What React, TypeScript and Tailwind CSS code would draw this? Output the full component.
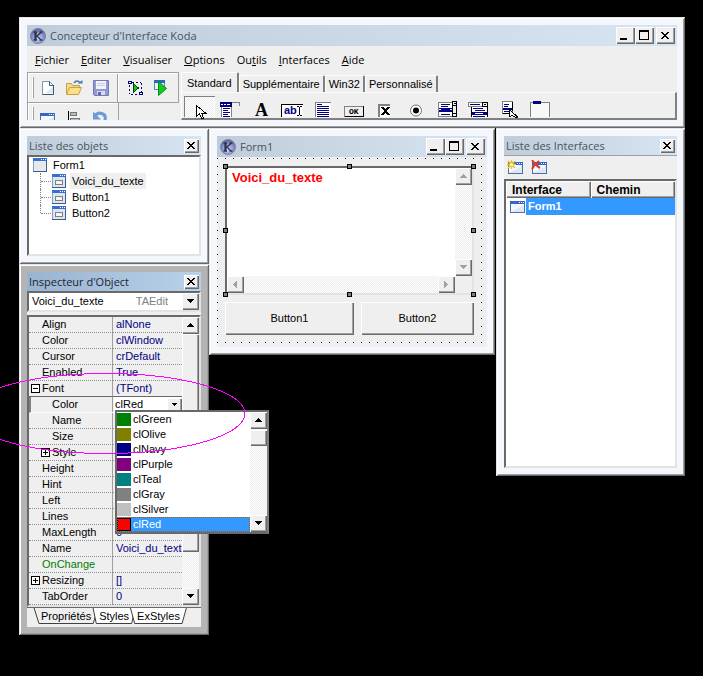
import { useState } from "react";
import type { ReactNode } from "react";

const raised = "bg-[#efefef] shadow-[inset_1px_1px_#fff,inset_-1px_-1px_#696969,inset_-2px_-2px_#a0a0a0]";
const track = "bg-[repeating-conic-gradient(#fff_0_25%,#ececec_0_50%)] bg-[length:2px_2px]";
const sunken = "border-2 border-t-[#696969] border-l-[#696969] border-r-[#e3e3e3] border-b-[#e3e3e3]";

interface WindowProps {
  className: string;
  active?: boolean;
  children: ReactNode;
}

function Window({ className, active, children }: WindowProps) {
  return (
    <section
      className={`absolute p-2 shadow-[inset_1px_1px_#e3e3e3,inset_-1px_-1px_#696969,inset_2px_2px_#fff,inset_-2px_-2px_#a0a0a0] ${
        active ? "bg-[#b4b4b4]" : "bg-[#f4f7fc]"
      } ${className}`}
    >
      <div className="flex h-full flex-col bg-[#efefef]">{children}</div>
    </section>
  );
}

function KodaLogo() {
  return (
    <svg width="16" height="16" viewBox="0 0 16 16" className="shrink-0">
      <defs>
        <radialGradient id="koda" cx="50%" cy="65%" r="60%">
          <stop offset="0" stopColor="#d5d9fa" />
          <stop offset="0.6" stopColor="#8b93cf" />
          <stop offset="1" stopColor="#5c659c" />
        </radialGradient>
      </defs>
      <circle cx="8" cy="8" r="7.5" fill="url(#koda)" stroke="#7d86a8" />
      <path d="M4 4l1 0v8M6 4v8M3.500 4h3.500M3.500 12h3.500M11.500 4L7 8l4 4M9.500 4h3M9.500 12h3" fill="none" stroke="#30344e" strokeWidth="1.3" />
    </svg>
  );
}

function CloseGlyph() {
  return (
    <svg width="8" height="7" viewBox="0 0 8 7" shapeRendering="crispEdges" className="mr-px mb-px">
      <path d="M0 0h2v1h-2zM6 0h2v1h-2zM1 1h2v1h-2zM5 1h2v1h-2zM2 2h4v1h-4zM3 3h2v1h-2zM2 4h4v1h-4zM1 5h2v1h-2zM5 5h2v1h-2zM0 6h2v1h-2zM6 6h2v1h-2z" />
    </svg>
  );
}

function SystemButtons() {
  return (
    <div className="flex pr-[2px]">
      <button aria-label="Réduire" className={`flex h-[17px] w-[19px] items-end justify-center pb-1 ${raised}`}>
        <span className="mr-1 h-[2px] w-[7px] bg-black" />
      </button>
      <button aria-label="Agrandir" className={`flex h-[17px] w-[19px] items-center justify-center ${raised}`}>
        <span className="mr-px mb-px h-[10px] w-[10px] border border-t-2 border-black" />
      </button>
      <button aria-label="Fermer" className={`ml-[2px] flex h-[17px] w-[19px] items-center justify-center ${raised}`}>
        <CloseGlyph />
      </button>
    </div>
  );
}

function FormTitle({ title }: { title: string }) {
  return (
    <header className="flex h-[21px] shrink-0 items-center gap-1 bg-linear-to-r from-[#bfcddb] to-[#d7e4f2] pl-[3px]">
      <KodaLogo />
      <h2 className="flex-1 font-['Open_Sans',sans-serif] text-[11px] leading-4 text-[#4a5260]">{title}</h2>
      <SystemButtons />
    </header>
  );
}

function ToolTitle({ title, active }: { title: string; active?: boolean }) {
  return (
    <header
      className={`flex h-[19px] shrink-0 items-center justify-between bg-linear-to-r pr-[2px] pl-[2px] ${
        active ? "from-[#99b4d1] to-[#b9d1ea] text-[#1c2530]" : "from-[#bfcddb] to-[#d7e4f2] text-[#4a5260]"
      }`}
    >
      <h2 className="font-['Open_Sans',sans-serif] text-[11px] leading-4 whitespace-nowrap">{title}</h2>
      <button aria-label="Fermer" className={`flex h-[14px] w-[15px] items-center justify-center ${raised}`}>
        <CloseGlyph />
      </button>
    </header>
  );
}

function Arrow({ dir, dim }: { dir: "up" | "down" | "left" | "right"; dim?: boolean }) {
  const shapes = {
    up: "M3 0h1v1h1v1h1v1h1v1H0V3h1V2h1V1h1z",
    down: "M0 0h7v1H6v1H5v1H4v1H3V3H2V2H1V1H0z",
    left: "M4 0v7H3V6H2V5H1V4H0V3h1V2h1V1h1V0z",
    right: "M0 0h1v1h1v1h1v1h1v1H3v1H2v1H1v1H0z",
  };
  return (
    <svg width="7" height="7" viewBox={dir === "up" || dir === "down" ? "0 -1 7 7" : "-1 0 7 7"} shapeRendering="crispEdges">
      <path d={shapes[dir]} fill={dim ? "#a0a0a0" : "#000"} />
    </svg>
  );
}

function ScrollButton({ dir, dim }: { dir: "up" | "down" | "left" | "right"; dim?: boolean }) {
  const labels = { up: "Haut", down: "Bas", left: "Gauche", right: "Droite" };
  return (
    <button aria-label={labels[dir]} className={`flex h-[17px] w-[17px] shrink-0 items-center justify-center ${raised}`}>
      <Arrow dir={dir} dim={dim} />
    </button>
  );
}

function FormIcon({ control }: { control?: boolean }) {
  return (
    <svg width="14" height="14" viewBox="0 0 14 14" shapeRendering="crispEdges" className="shrink-0">
      <rect width="14" height="14" fill="#3d5d8c" />
      <path d="M0 3h1v10H0z" fill="#7fa0cc" />
      <rect x="1" y="3" width="12" height="10" fill={control ? "#dde5ee" : "#e6e8ea"} />
      <rect width="14" height="3" fill="#3a6fd0" />
      <path d="M8 1h1v1H8zM10 1h1v1h-1zM12 1h1v1h-1z" fill="#fff" />
      {control && <rect x="3.5" y="6.5" width="7" height="4" fill="#f4f4f4" stroke="#808080" />}
    </svg>
  );
}

function WideFormIcon({ badge }: { badge?: "new" | "delete" }) {
  return (
    <svg width="17" height="15" viewBox="0 0 17 15" className="shrink-0">
      <rect x="1.5" y="2.5" width="14" height="11" fill="#f4f8ff" stroke="#50719f" />
      <rect x="1" y="2" width="15" height="3" fill="#3567c8" />
      <path d="M10 3h1v1h-1zM12 3h1v1h-1zM14 3h1v1h-1z" fill="#fff" />
      <path d="M2 13h13v-7z" fill="#dce7f5" />
      {badge === "new" && (
        <>
          <path d="M4.5 0v9M0 4.5h9M1 1l7 7M8 1L1 8" stroke="#e8c52d" strokeWidth="1.4" />
          <circle cx="4.500" cy="4.500" r="1.500" fill="#fff7b0" />
        </>
      )}
      {badge === "delete" && (
        <path d="M1 0c2 3 4 6 8 8M8 1C5 3 3 5 1 9" stroke="#e23a22" strokeWidth="2" fill="none" />
      )}
    </svg>
  );
}

/* Barre d'outils principale */

function NewIcon() {
  return (
    <svg width="16" height="16" viewBox="0 0 16 16">
      <path d="M2.5 1.5h7l4 4v9h-11z" fill="#fff" stroke="#7f96ad" />
      <path d="M9.5 1.5v4h4M13.5 5v9.5h-11" fill="none" stroke="#3d5878" />
      <path d="M5 13.5h8v-7z" fill="#dfe9f3" />
    </svg>
  );
}

function OpenIcon() {
  return (
    <svg width="18" height="16" viewBox="0 0 18 16">
      <path d="M1.5 14V3.5h5l1 2h7V8" fill="#f5d98a" stroke="#c9a145" />
      <path d="M1.5 14.5l3-7h12l-3 7z" fill="#fbe08c" stroke="#c9a145" />
      <path d="M9 3c2-3 5-2.500 6 0" fill="none" stroke="#4d78ab" strokeWidth="1.5" />
      <path d="M12.500 3.500h5V0z" fill="#4d78ab" />
    </svg>
  );
}

function SaveIcon() {
  return (
    <svg width="16" height="16" viewBox="0 0 16 16">
      <path d="M.5.5h15v15h-14l-1-1z" fill="#9499d3" stroke="#7378b4" />
      <rect x="3" y="1" width="10" height="8" fill="#f3f4fa" />
      <path d="M4 3.500h8M4 5.500h8" stroke="#c8cbe5" />
      <rect x="4" y="11" width="8" height="4" fill="#d6d9ef" />
      <rect x="5" y="12" width="3" height="3" fill="#6268a6" />
    </svg>
  );
}

function TestIcon() {
  return (
    <svg width="16" height="16" viewBox="0 0 16 16" shapeRendering="crispEdges">
      <path d="M5 2.500h9M2.500 5v9M14.500 3v9M4 14.500h8" stroke="#000080" strokeDasharray="2 2" />
      <path d="M1 1h4v3H1zM12 12h4v3h-4z" fill="#000080" />
      <path d="M2 2h2v1H2zM13 13h2v1h-2z" fill="#fff" />
      <path d="M6.500 4v8l5-4z" fill="#00d000" stroke="#004000" />
    </svg>
  );
}

function RunIcon() {
  return (
    <svg width="16" height="16" viewBox="0 0 16 16">
      <rect x="1.500" y=".5" width="10" height="9" fill="#e6eef8" stroke="#6085ba" />
      <rect x="1" y="0" width="11" height="3" fill="#2c68bd" />
      <path d="M5.500 1.500v14l8-7z" fill="#10cb20" stroke="#078b12" />
    </svg>
  );
}

function AlignIcon() {
  return (
    <svg width="16" height="16" viewBox="0 0 16 16" shapeRendering="crispEdges">
      <path d="M2.500 1v15" stroke="#000" />
      <rect x="4.500" y="2.500" width="6" height="3" fill="#bbb" stroke="#777" />
      <rect x="4.500" y="8.500" width="9" height="3" fill="#bbb" stroke="#777" />
    </svg>
  );
}

function UndoIcon() {
  return (
    <svg width="16" height="16" viewBox="0 0 16 16">
      <path d="M3 6c3-5 12-3 10 4-.5 2-2 3-4 4" fill="none" stroke="#6c9adb" strokeWidth="3" />
      <path d="M1 1.500v8h8z" fill="#6c9adb" />
    </svg>
  );
}

function Grip() {
  return <span className="mr-[5px] ml-1 my-1 w-[2px] shrink-0 self-stretch border-r border-[#a0a0a0] bg-white" />;
}

function Toolbars() {
  return (
    <div className="flex w-[152px] shrink-0 flex-col">
      <div className="flex h-[31px] shrink-0 items-center border border-[#a0a0a0] shadow-[inset_1px_1px_#fff]">
        <Grip />
        <button aria-label="Nouveau" className="px-[1px]"><NewIcon /></button>
        <button aria-label="Ouvrir" className="ml-2"><OpenIcon /></button>
        <button aria-label="Enregistrer" className="ml-[10px]"><SaveIcon /></button>
        <span className="ml-2 h-[28px] w-[2px] border-l border-[#a0a0a0] bg-white" />
        <button aria-label="Tester" className="ml-2"><TestIcon /></button>
        <button aria-label="Exécuter" className="ml-[10px]"><RunIcon /></button>
      </div>
      <div className="flex h-[31px] w-[92px] shrink-0 items-center border border-t-0 border-[#a0a0a0] shadow-[inset_1px_1px_#fff]">
        <Grip />
        <button aria-label="Fiche"><WideFormIcon /></button>
        <button aria-label="Aligner" className="ml-[10px]"><AlignIcon /></button>
        <button aria-label="Annuler" className="ml-[10px]"><UndoIcon /></button>
      </div>
    </div>
  );
}

/* Palette des contrôles, chaque dessin occupe un bouton de 31 x 21 */

const palette: { name: string; icon: ReactNode }[] = [
  { name: "Pointeur", icon: <path d="M12.500 9.500v11l3-2.500 2 4h2l-2-5h4z" fill="#fff" stroke="#000" /> },
  {
    name: "Menu",
    icon: (
      <>
        <path d="M5 6h12v5H5z" fill="#000080" />
        <path d="M6 8h2v1H6zM9 8h2v1H9zM12 8h3v1h-3z" fill="#fff" />
        <path d="M17 6.500h8M24.500 7v3" stroke="#808080" />
        <path d="M6 11h11v10H6z" fill="#fff" />
        <path d="M6.500 11v10M16.500 11v10" stroke="#808080" />
        <path d="M8 12.500h7M8 14.500h5M8 16.500h7M8 18.500h5M8 20.500h7" stroke="#000080" />
      </>
    ),
  },
  {
    name: "Label",
    icon: <text x="9" y="20" fontFamily="Liberation Serif, serif" fontWeight="bold" fontSize="18">A</text>,
  },
  {
    name: "Input",
    icon: (
      <>
        <path d="M4 8h22v13H4z" fill="#fff" />
        <path d="M4.500 21V8.500H26" stroke="#000" fill="none" />
        <text x="7" y="18" fontFamily="Liberation Sans, sans-serif" fontWeight="bold" fontSize="11" fill="#000080">ab</text>
        <path d="M20 10.500h2M23 10.500h2M22.500 11v8M20 19.500h2M23 19.500h2" stroke="#000" />
      </>
    ),
  },
  {
    name: "Edit",
    icon: (
      <>
        <path d="M7 6h16v15H7z" fill="#fff" />
        <path d="M7.500 21V6.500H23" stroke="#808080" fill="none" />
        <path d="M9 8h5v1H9zM9 10h12v1H9zM9 12h12v1H9zM9 14h12v1H9zM9 16h12v1H9zM9 18h12v1H9zM9 20h12v1H9z" fill="#000080" />
      </>
    ),
  },
  {
    name: "Button",
    icon: (
      <>
        <path d="M5.500 10.500h19v10h-19z" fill="#efefef" stroke="#808080" />
        <path d="M6 20.500h19M24.500 10v11" stroke="#000" />
        <text x="10" y="18" fontFamily="Liberation Mono, monospace" fontWeight="bold" fontSize="8">OK</text>
      </>
    ),
  },
  {
    name: "Checkbox",
    icon: (
      <>
        <path d="M8 8h12v13H8z" fill="#fff" />
        <path d="M9 21V9h11" stroke="#808080" strokeWidth="2" fill="none" />
        <path d="M11 11h3v1h1v1h1v-1h1v-1h3v1h-1v1h-1v1h-1v2h1v1h1v1h1v1h-3v-1h-1v-1h-1v1h-1v1h-3v-1h1v-1h1v-1h1v-2h-1v-1h-1v-1h-1z" />
      </>
    ),
  },
  {
    name: "Radio",
    icon: (
      <g shapeRendering="auto">
        <circle cx="15" cy="14.500" r="5.500" fill="#fff" stroke="#707070" />
        <circle cx="15" cy="14.500" r="3" />
      </g>
    ),
  },
  {
    name: "List",
    icon: (
      <>
        <path d="M6.500 6.500h14v14h-14z" fill="#fff" stroke="#808080" />
        <path d="M20.500 5.500h4v15h-4z" fill="#efefef" stroke="#000" />
        <path d="M21 9.500h4M21 17.500h4M22 7.500h2" stroke="#000" />
        <path d="M9 8h9v1H9zM9 10h7v1H9zM9 18h9v1H9zM7 12h13v1H7zM9 13h9v1H9zM7 14h13v2H7z" fill="#000080" />
      </>
    ),
  },
  {
    name: "Combo",
    icon: (
      <>
        <path d="M8 11h17v10H8z" fill="#fff" />
        <path d="M5.500 6.500h19v4h-19z" fill="#fff" stroke="#808080" />
        <path d="M19.500 6.500h5v4h-5zM8.500 11v10M24.500 11v10" fill="#efefef" stroke="#000" />
        <path d="M7 8h10v1H7zM10 12h10v1H10zM12 14h10v1H12zM10 20h12v1H10zM9 16h15v3H9z" fill="#000080" />
        <path d="M21 8h2v1h-2z" />
        <path d="M12 17h8v1h-8z" fill="#fff" />
      </>
    ),
  },
  {
    name: "ContextMenu",
    icon: (
      <>
        <path d="M8.500 5.500h10v12h-10z" fill="#fff" stroke="#808080" />
        <path d="M18.500 6v9M9 17.500h7" stroke="#000" />
        <path d="M10 8h5v1h-5zM10 10h4v1h-4zM9 12h9v2H9zM10 15h5v1h-5z" fill="#000080" />
        <path d="M15.500 13.500v7l3-1 3 2 2-.500z" fill="#fff" stroke="#000" />
      </>
    ),
  },
  {
    name: "Group",
    icon: (
      <>
        <path d="M6 7h18v14H6z" fill="#f8f8f8" />
        <path d="M5.500 21V6.500H24.500V21" stroke="#808080" fill="none" />
        <path d="M8 5h8v3H8z" fill="#000080" />
      </>
    ),
  },
];

function Palette() {
  const tabs = ["Standard", "Supplémentaire", "Win32", "Personnalisé"];
  const [tab, setTab] = useState("Standard");
  const [tool, setTool] = useState("Pointeur");

  return (
    <div className="flex min-w-0 flex-1 flex-col pl-[2px]">
      <div role="tablist" className="flex h-5 shrink-0 items-end">
        {tabs.map(name => (
          <button
            key={name}
            role="tab"
            aria-selected={tab === name}
            onClick={() => setTab(name)}
            className={`rounded-t-[2px] border-t border-r-2 border-l border-t-white border-r-[#808080] border-l-white text-[11px] leading-4 ${
              tab === name ? "h-5 px-[5px]" : "h-[17px] px-[3px]"
            }`}
          >
            {name}
          </button>
        ))}
      </div>
      <div className="flex min-h-0 flex-1 border-t border-r-2 border-b-2 border-l border-t-white border-r-[#808080] border-b-[#808080] border-l-white pt-[3px] pb-[2px] pl-[2px]">
        {palette.map(({ name, icon }) => (
          <button
            key={name}
            aria-label={name}
            onClick={() => setTool(name)}
            className={`h-[21px] w-[31px] shrink-0 ${
              tool === name ? `${track} shadow-[inset_1px_1px_#808080,inset_-1px_0_#fff]` : ""
            }`}
          >
            <svg width="31" height="21" viewBox="0 0 31 21" shapeRendering="crispEdges" className="overflow-visible">{icon}</svg>
          </button>
        ))}
      </div>
    </div>
  );
}

function MainWindow() {
  const menu = [["", "F", "ichier"], ["", "E", "diter"], ["", "V", "isualiser"], ["", "O", "ptions"], ["Ou", "t", "ils"], ["", "I", "nterfaces"], ["", "A", "ide"]];
  return (
    <Window className="top-[17px] right-[18px] left-[19px]">
      <FormTitle title="Concepteur d'Interface Koda" />
      <nav className="flex h-[26px] items-center gap-3 pt-[2px] pl-2 font-['Open_Sans',sans-serif] text-[11px] leading-4">
        {menu.map(([before, key, after]) => (
          <button key={before + key}>
            {before}
            <u>{key}</u>
            {after}
          </button>
        ))}
      </nav>
      <div className="flex h-12 overflow-hidden">
        <Toolbars />
        <Palette />
      </div>
    </Window>
  );
}

function ObjectList() {
  return (
    <Window className="top-[128px] left-[19px] w-[190px]">
      <ToolTitle title="Liste des objets" />
      <ul className={`min-h-[101px] bg-white pl-1 text-[11px] leading-4 ${sunken}`}>
        <li>
          <div className="flex h-4 items-center gap-[6px]">
            <FormIcon />
            Form1
          </div>
          <ul className="ml-[7px]">
            {["Voici_du_texte", "Button1", "Button2"].map((name, i) => (
              <li key={name} className="flex h-4 items-center">
                <span className={`w-px self-stretch border-l border-dotted border-[#808080] ${i === 2 ? "mb-2" : ""}`} />
                <span className="mr-[1px] w-[10px] border-t border-dotted border-[#808080]" />
                <FormIcon control />
                <span className={`ml-1 px-[2px] ${i === 0 ? "bg-[#efefef]" : ""}`}>{name}</span>
              </li>
            ))}
          </ul>
        </li>
      </ul>
    </Window>
  );
}

const handles = [
  "-top-[2px] -left-[2px]",
  "-top-[2px] left-1/2 -ml-[3px]",
  "-top-[2px] -right-[2px]",
  "top-1/2 -mt-[3px] -left-[2px]",
  "top-1/2 -mt-[3px] -right-[2px]",
  "-bottom-[2px] -left-[2px]",
  "-bottom-[2px] left-1/2 -ml-[3px]",
  "-bottom-[2px] -right-[2px]",
];

function FormDesigner() {
  return (
    <Window className="top-[128px] left-[209px] w-[286px]">
      <FormTitle title="Form1" />
      <div className="mt-px bg-[radial-gradient(circle_at_0.5px_0.5px,#000_0.7px,transparent_0.8px)] bg-[length:8px_8px] pt-2 pr-[13px] pb-3 pl-2">
        <div className="relative">
          <div className={`grid grid-cols-[1fr_17px] grid-rows-[108px_17px] bg-[#efefef] ${sunken}`}>
            <textarea
              aria-label="Voici_du_texte"
              defaultValue="Voici_du_texte"
              wrap="off"
              className="resize-none overflow-hidden bg-white pt-[2px] pl-[5px] text-[13px] leading-4 font-bold text-[#ff0000] outline-none"
            />
            <div className={`flex flex-col justify-between ${track}`}>
              <ScrollButton dir="up" dim />
              <ScrollButton dir="down" dim />
            </div>
            <div className={`flex justify-between ${track}`}>
              <ScrollButton dir="left" dim />
              <ScrollButton dir="right" dim />
            </div>
          </div>
          {handles.map(place => (
            <span key={place} className={`absolute h-[5px] w-[5px] border border-black bg-[#808080] ${place}`} />
          ))}
        </div>
        <div className="mt-[7px] grid grid-cols-[129px_1fr] gap-[7px] text-[11px]">
          <button className={`h-[33px] ${raised}`}>Button1</button>
          <button className={`h-[33px] ${raised}`}>Button2</button>
        </div>
      </div>
    </Window>
  );
}

function InterfaceList() {
  return (
    <Window className="top-[128px] left-[496px] w-[189px]">
      <ToolTitle title="Liste des Interfaces" />
      <div className="flex h-6 items-center gap-[7px] border-t border-[#a0a0a0] pl-[3px]">
        <button aria-label="Nouvelle interface"><WideFormIcon badge="new" /></button>
        <button aria-label="Supprimer l'interface"><WideFormIcon badge="delete" /></button>
      </div>
      <div className={`min-h-[289px] bg-white ${sunken}`}>
        <table className="w-full table-fixed border-collapse text-left text-[12px] leading-4">
          <thead>
            <tr className="h-[17px]">
              <th className={`pl-[6px] ${raised}`}>Interface</th>
              <th className={`pl-[6px] ${raised}`}>Chemin</th>
            </tr>
          </thead>
          <tbody>
            <tr>
              <td colSpan={2}>
                <div className="flex h-[17px] items-center pl-[3px]">
                  <WideFormIcon />
                  <span className="flex-1 bg-[#3399ff] pl-[2px] text-[11px] leading-[17px] font-bold text-white">Form1</span>
                </div>
              </td>
            </tr>
          </tbody>
        </table>
      </div>
    </Window>
  );
}

const colors = [
  ["clGreen", "bg-[#008000]"],
  ["clOlive", "bg-[#808000]"],
  ["clNavy", "bg-[#000080]"],
  ["clPurple", "bg-[#800080]"],
  ["clTeal", "bg-[#008080]"],
  ["clGray", "bg-[#808080]"],
  ["clSilver", "bg-[#c0c0c0]"],
  ["clRed", "bg-[#ff0000]"],
];

function ColorPicker() {
  const [open, setOpen] = useState(true);
  const [value, setValue] = useState("clRed");

  return (
    <div className="relative">
      <div className="-ml-[2px] flex h-[15px] items-center bg-white pl-[1px] text-black">
        <input
          aria-label="Color"
          value={value}
          onChange={e => setValue(e.target.value)}
          className="w-0 flex-1 outline-none"
        />
        <button aria-label="Choisir" onClick={() => setOpen(!open)} className={`flex h-[14px] w-[15px] items-center justify-center ${raised}`}>
          <svg width="5" height="3" viewBox="0 0 5 3" shapeRendering="crispEdges"><path d="M0 0h5v1H4v1H3v1H2V2H1V1H0z" /></svg>
        </button>
      </div>
      {open && (
        <div className="absolute top-[13px] -left-[1px] z-20 flex w-[154px] border-2 border-t-[#696969] border-r-[#808080] border-b-[#696969] border-l-[#696969] bg-white">
          <ul role="listbox" aria-label="Couleurs" className="flex-1 text-black">
            {colors.map(([name, fill]) => (
              <li
                key={name}
                role="option"
                aria-selected={value === name}
                onClick={() => setValue(name)}
                className={`flex h-[15px] items-center gap-[2px] ${
                  value === name ? "bg-[#3399ff] text-white outline-1 -outline-offset-1 outline-dotted outline-[#aa5500]" : ""
                }`}
              >
                <span className={`h-[13px] w-[14px] ${fill} ${value === name ? "border border-black" : ""}`} />
                {name}
              </li>
            ))}
          </ul>
          <div className={`flex w-[17px] flex-col ${track}`}>
            <ScrollButton dir="up" />
            <div className={`mt-[1px] h-[16px] ${raised}`} />
            <div className="flex-1" />
            <ScrollButton dir="down" />
          </div>
        </div>
      )}
    </div>
  );
}

interface Property {
  name: string;
  value?: string;
  sign?: "+" | "-";
  nested?: boolean;
  event?: boolean;
}

const properties: Property[] = [
  { name: "Align", value: "alNone" },
  { name: "Color", value: "clWindow" },
  { name: "Cursor", value: "crDefault" },
  { name: "Enabled", value: "True" },
  { name: "Font", value: "(TFont)", sign: "-" },
  { name: "Color", nested: true },
  { name: "Name", nested: true },
  { name: "Size", nested: true },
  { name: "Style", nested: true, sign: "+" },
  { name: "Height" },
  { name: "Hint" },
  { name: "Left" },
  { name: "Lines" },
  { name: "MaxLength", value: "0" },
  { name: "Name", value: "Voici_du_texte" },
  { name: "OnChange", event: true },
  { name: "Resizing", value: "[]", sign: "+" },
  { name: "TabOrder", value: "0" },
];

function Sign({ sign }: { sign: "+" | "-" }) {
  return (
    <svg width="9" height="9" viewBox="0 0 9 9" shapeRendering="crispEdges" className="mr-[2px]">
      <rect x=".5" y=".5" width="8" height="8" fill="#fff" stroke="#000" />
      <path d={sign === "+" ? "M2 4.500h5M4.500 2v5" : "M2 4.500h5"} stroke="#000" />
    </svg>
  );
}

function PropertyTable() {
  return (
    <table className="w-full table-fixed border-separate border-spacing-0 leading-[15px]">
      <tbody>
        {properties.map((p, i) => {
          const editing = p.nested && p.name === "Color";
          const line = editing ? "border-b border-b-white" : p.sign === "-" ? "border-b border-b-[#696969]" : "border-b border-dotted border-b-[#909090]";
          return (
            <tr key={i} className="h-4">
              <th className={`w-[84px] p-0 font-normal ${line} ${editing ? "border-l-2 border-l-[#808080]" : ""}`}>
                <div className={`flex h-[15px] items-center border-r border-[#a0a0a0] ${p.event ? "text-[#008000]" : ""} ${
                  p.nested ? (p.sign ? "pl-3" : editing ? "pl-[21px]" : "pl-[23px]") : p.sign ? "pl-[2px]" : "pl-[13px]"
                }`}>
                  {p.sign && <Sign sign={p.sign} />}
                  {p.name}
                </div>
              </th>
              <td className={`p-0 pl-[3px] text-left text-[#000080] ${line}`}>
                {editing ? <ColorPicker /> : <div className="h-[15px] overflow-hidden whitespace-nowrap">{p.value}</div>}
              </td>
            </tr>
          );
        })}
      </tbody>
    </table>
  );
}

function InspectorTabs() {
  const tabs = ["Propriétés", "Styles", "ExStyles"];
  const [tab, setTab] = useState("Propriétés");
  return (
    <div role="tablist" className="flex h-5 items-start border-t border-[#696969] pl-[10px]">
      {tabs.map(name => (
        <button
          key={name}
          role="tab"
          aria-selected={tab === name}
          onClick={() => setTab(name)}
          className="relative isolate h-4 px-1 leading-4"
        >
          <svg viewBox="0 0 60 16" preserveAspectRatio="none" className="absolute inset-0 -z-10 h-full w-full overflow-visible">
            <path
              d="M-3 0L2 15.500H58L63 0"
              fill={tab === name ? "#efefef" : "#fff"}
              stroke="#404040"
              vectorEffect="non-scaling-stroke"
            />
          </svg>
          {name}
        </button>
      ))}
    </div>
  );
}

function Inspector() {
  return (
    <Window active className="top-[264px] left-[19px] w-[190px]">
      <ToolTitle title="Inspecteur d'Object" active />
      <div className="text-[11px]">
        <div className={`flex h-[21px] items-center bg-white pl-[3px] ${sunken}`}>
          <select aria-label="Objet" className="w-0 flex-1 appearance-none bg-transparent outline-none">
            <option>Voici_du_texte</option>
            <option>Button1</option>
            <option>Button2</option>
          </select>
          <span className="mr-[14px] text-[#808080]">TAEdit</span>
          <ScrollButton dir="down" />
        </div>
        <div className={`mt-[3px] flex ${sunken}`}>
          <div className="min-w-0 flex-1">
            <PropertyTable />
          </div>
          <div className={`flex w-[17px] flex-col ${track}`}>
            <ScrollButton dir="up" />
            <div className={`h-[218px] ${raised}`} />
            <div className="flex-1" />
            <ScrollButton dir="down" />
          </div>
        </div>
        <InspectorTabs />
      </div>
    </Window>
  );
}

export default function App() {
  return (
    <main className="relative h-screen overflow-hidden bg-black font-['Liberation_Sans',Arial,sans-serif] text-black">
      <MainWindow />
      <ObjectList />
      <FormDesigner />
      <InterfaceList />
      <Inspector />
      <svg className="pointer-events-none absolute inset-0 z-30 h-full w-full">
        <ellipse cx="106" cy="413.500" rx="139" ry="40" fill="none" stroke="#ff00ff" shapeRendering="crispEdges" />
      </svg>
    </main>
  );
}
